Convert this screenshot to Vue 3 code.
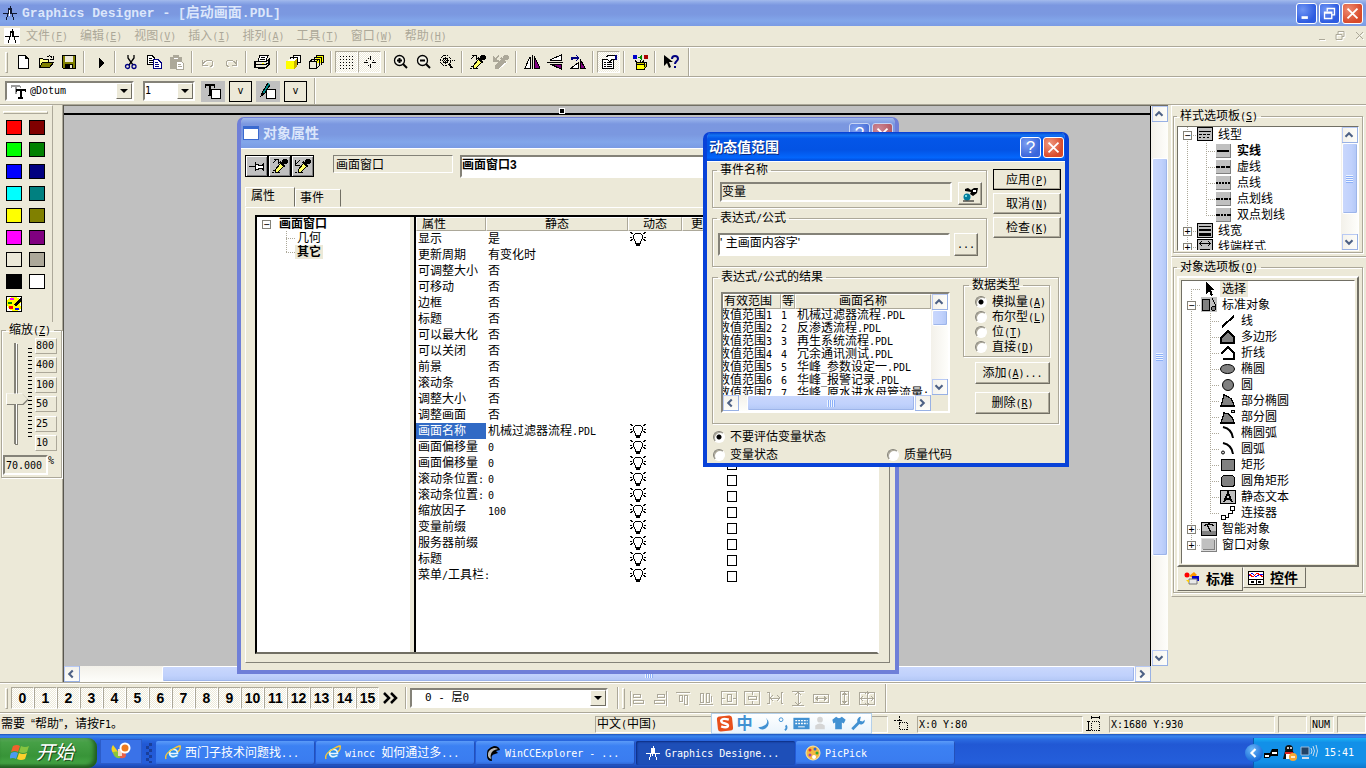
<script setup>
import { h, ref } from 'vue'

// Text helper: half-width runs are set in a 6px-pitch mono face; "&X" underlines X.
const T = (props) => {
  const out = []
  for (const run of String(props.s).match(/[ -~]+|[^ -~]+/g) || []) {
    if (/^[ -~]/.test(run)) {
      const kids = run.split(/(&\w)/).filter(Boolean).map((p) => (/^&\w$/.test(p) ? h('u', p[1]) : p))
      out.push(h('span', { class: 'lat' }, kids))
    } else out.push(run)
  }
  return h('span', { class: 'txt' }, out)
}
T.props = ['s']

const art = {
  compass: '<path d="M8 1v3M7 6L4 15M9 6l3 9M1 8h14" fill="none" stroke="currentColor"/><path d="M6 3h4v5H6z" fill="currentColor"/><path d="M7 5h1v6H7z" fill="#fff"/>',
  new: '<path d="M3 1.5h7l3 3v10H3z" fill="#fff" stroke="#000"/><path d="M10 1.5v3h3" fill="none" stroke="#000"/>',
  open: '<path d="M1.500 13.500v-9h3l1 1h5v3" fill="#ff8" stroke="#000"/><path d="M1.500 13.500l3-5h11l-4 5z" fill="#808000" stroke="#000"/><path d="M9 3c2-2 4-1 5 1M15 2v3h-3" fill="none" stroke="#000"/>',
  save: '<path d="M1.500 1.500h13v13h-12l-1-1z" fill="#808000" stroke="#000"/><path d="M4 2h8v6H4z" fill="#ece9d8"/><path d="M4 10h8v4H4z" fill="#000"/><path d="M9 11h2v3H9z" fill="#ece9d8"/>',
  play: '<path d="M7 4l5 5-5 5z" fill="#000"/>',
  cut: '<path d="M5 1v3l5 7M11 1v3l-5 7" fill="none" stroke="#000" stroke-width="1.300"/><circle cx="4.500" cy="12.500" r="2" fill="none" stroke="#000080" stroke-width="1.300"/><circle cx="11" cy="12.500" r="2" fill="none" stroke="#000080" stroke-width="1.300"/>',
  copy: '<path d="M1 1.500h5l2 2v7H1z" fill="#fff" stroke="#000"/><path d="M2.500 4h3M2.500 6h4M2.500 8h4" stroke="#000"/><path d="M7 5.500h5l3 3v6H7z" fill="#fff" stroke="#000080"/><path d="M9 8.500h3M9 10.500h4M9 12.500h4" stroke="#000080"/>',
  paste: '<path d="M1 3h12v12H1z" fill="#aca899"/><path d="M4 1h6v3H4z" fill="#aca899"/><path d="M5 4h4v1H5z" fill="#fff"/><path d="M7.500 7.500h5l2 2v6h-7z" fill="#fff" stroke="#aca899"/><path d="M9 10.500h3M9 12.500h4" stroke="#aca899"/>',
  undo: '<path d="M2.500 6v5h5M3 10c3-5 10-5 10-1 0 2-1 3-3 4" fill="none" stroke="#fff" transform="translate(1 1)"/><path d="M2.500 6v5h5M3 10c3-5 10-5 10-1 0 2-1 3-3 4" fill="none" stroke="#aca899"/>',
  redo: '<path d="M13.500 6v5h-5M13 10c-3-5-10-5-10-1 0 2 1 3 3 4" fill="none" stroke="#fff" transform="translate(1 1)"/><path d="M13.500 6v5h-5M13 10c-3-5-10-5-10-1 0 2 1 3 3 4" fill="none" stroke="#aca899"/>',
  print: '<path d="M4 7l2-5.500h8L12 7" fill="#fff" stroke="#000"/><path d="M7 3.500h4M6 5.500h5" stroke="#000"/><path d="M1 7.500h11l3-2v5l-3 3H1z" fill="#ece9d8" stroke="#000" stroke-width="1.400"/><path d="M1 10.500h11l3-2M4 14.500h7" stroke="#000" fill="none" stroke-width="1.400"/><path d="M8 9h2v1H8z" fill="#ff0"/>',
  front: '<path d="M8.500 6V1.500h7v7H13M5.500 5V3.500h7v7H10" stroke="#000" fill="#fff"/><path d="M2 7l2-2h7L9 7z" fill="#fff"/><path d="M1 7h8v8H1z" fill="#ff0"/><path d="M9 7l3-3v8l-3 3z" fill="#c8b400"/>',
  back: '<path d="M8 1h7v8H8z" fill="#ff0"/><path d="M3.500 12V5.500h8V12M6.500 8V3.500h7v7" stroke="#000" fill="none"/><path d="M8.500 3V1.500h7v7H14" stroke="#000" fill="none"/><path d="M1.500 7.500h7v7h-7z" stroke="#000" fill="#ece9d8"/><path d="M1.500 7.500l2-2M8.500 7.500l2-2M8.500 14.500l3-3" stroke="#000"/>',
  grid: '<g stroke="#000" stroke-dasharray="1 2"><path d="M1 2.500h14M1 5.500h14M1 8.500h14M1 11.500h14M1 14.500h14"/></g>',
  snap: '<path d="M8 2v4M8 10v4M2 8h4M10 8h4" stroke="#000"/><path d="M6 4.500h4M6 11.500h4M4.500 6v4M11.500 6v4" stroke="#000" stroke-dasharray="1 1"/>',
  zin: '<circle cx="6.500" cy="6.500" r="5" fill="#fff" fill-opacity=".4" stroke="#000" stroke-width="1.300"/><path d="M4 6.500h5M6.500 4v5" stroke="#000" stroke-width="2"/><path d="M10 10l4 4" stroke="#000" stroke-width="2"/>',
  zout: '<circle cx="6.500" cy="6.500" r="5" fill="#fff" fill-opacity=".4" stroke="#000" stroke-width="1.300"/><path d="M4 6.500h5" stroke="#000" stroke-width="2"/><path d="M10 10l4 4" stroke="#000" stroke-width="2"/>',
  zsel: '<circle cx="6.500" cy="6.500" r="5" fill="none" stroke="#000" stroke-dasharray="2 1"/><circle cx="6.500" cy="6.500" r="2.500" fill="none" stroke="#000"/><path d="M6.500 3v7M3 6.500h13" stroke="#000" stroke-dasharray="1 1"/><path d="M10 10l3 4" stroke="#000" stroke-width="2"/>',
  pick: '<path d="M1 5l4-4M2 1.500h4v4" fill="none" stroke="#000"/><path d="M9 5l3 3-6 6H3v-2z" fill="#ff6" stroke="#000"/><path d="M8 4l5 5" stroke="#000" stroke-width="2"/><circle cx="13" cy="3.500" r="3" fill="#000"/><path d="M0 14.500h9M1 12.500h3" stroke="#000" stroke-dasharray="2 1"/>',
  apply: '<path d="M5 2L1 6M.500 2v5h4" fill="none" stroke="#000"/><path d="M9 5l3 3-6 6H3v-2z" fill="#ff6" stroke="#000"/><path d="M8 4l5 5" stroke="#000" stroke-width="2"/><circle cx="13" cy="3.500" r="3" fill="#000"/><path d="M0 14.500h9" stroke="#000" stroke-dasharray="2 1"/>',
  applyoff: '<path d="M6 2L1 6M.500 2v5h5M9 5l3 3-6 6H3v-2z" fill="#aca899" stroke="#aca899" stroke-width="1.500"/><path d="M8 4l5 5" stroke="#aca899" stroke-width="2"/><circle cx="13" cy="3.500" r="3" fill="#aca899"/><path d="M6 15l8-7" stroke="#fff"/>',
  mirh: '<path d="M6 3v11H1z" fill="#fff" stroke="#000"/><path d="M8 1v14" stroke="#000"/><path d="M10 2v12h6z" fill="#800080" stroke="#000"/>',
  mirv: '<path d="M14 1v5H3z" fill="#fff" stroke="#000"/><path d="M0 8h16" stroke="#000"/><path d="M14 15v-5H3z" fill="#800080" stroke="#000"/>',
  rot: '<path d="M2 6V4h6M6 1l3 3-3 3" fill="none" stroke="#000080" stroke-width="1.300"/><path d="M8 9v5H1z" fill="#fff" stroke="#000"/><path d="M10 5v9h5z" fill="#800080" stroke="#000"/>',
  prop: '<path d="M1.500 5.500h11v9h-11z" fill="#fff" stroke="#000"/><path d="M3 8h2M6 8h5M3 10.500h2M6 10.500h5M3 12.500h2M6 12.500h5" stroke="#000"/><path d="M5 3l3-2h5l3 2-2 3-3-1-2 3-2-2" fill="#fff" stroke="#000"/><path d="M14 1h2v5h-2z" fill="#000080"/>',
  lib: '<circle cx="3" cy="3" r="2.500" fill="#00c"/><path d="M10 1v5L6 3.500z" fill="#080"/><path d="M12 1h4v4h-4z" fill="#a00"/><path d="M3 6l2 3M8 6v3M12 6l-2 3" stroke="#000"/><path d="M4 10h8v5H4z" fill="#ff0" stroke="#000"/><path d="M4 10l2-2h8l-2 2M14 8v5l-2 2" stroke="#000" fill="#cc0"/>',
  help: '<path d="M1 1v11l3-3 2 5 2-1-2-5h4z" fill="#000"/><path d="M9 5c0-4 6-4 6 0 0 2-3 2-3 5M12 12v2" fill="none" stroke="#000080" stroke-width="2"/>',
  tt: '<path d="M1 3h9M5.500 3v8" stroke="#999" stroke-width="2"/><path d="M1 3v2M10 3v2" stroke="#999"/><path d="M6 7h9M10.500 7v8M8 14.500h5" stroke="#000" stroke-width="2"/><path d="M6 6v3M15 6v3" stroke="#000"/>',
  fontbox: '<path d="M0 2h10M5 2v10" stroke="#000" stroke-width="2"/><path d="M.500 1v4M9.500 1v4M3 12h4" stroke="#000"/><path d="M6.500 6.500h9v9h-9z" fill="#fff" stroke="#000"/>',
  penbox: '<path d="M8 0L3 8l-2 5 4-3 5-8" fill="#088" stroke="#000"/><path d="M0 14l5-4" stroke="#000"/><path d="M6.500 6.500h9v9h-9z" fill="#fff" stroke="#000"/>',
  pin: '<path d="M0 8.500h6M6.500 4v9M6 6.500h3l1 1h3l1.500-2v7l-1.500-2h-3l-1 1H6" fill="#fff" stroke="#000"/>',
  palette: '<path d="M0 0h16v16H0z" fill="#fff"/><path d="M1 6Q1 1 8 1t7 5q-2 2 0 5t-6 4Q1 15 1 6z" fill="#ff0"/><path d="M4 2h4v2H4z" fill="#f0f"/><path d="M2 6h4v2H2z" fill="#080"/><path d="M3 10h4v3H3z" fill="#f00"/><path d="M9 12h4v2H9z" fill="#00f"/><path d="M15 1L8 9l2 2 5-6z" fill="#000"/><path d="M.500.500h15v15H.500z" fill="none" stroke="#000"/>',
  bulb: '<path d="M5.500 12.500v-2l-2-3v-3l2-2h5l2 2v3l-2 3v2z" fill="#fff" stroke="#000"/><path d="M6 12h4v3H6z" fill="#000"/><path d="M0 1l3 2M0 6h2M0 10l3-2M16 1l-3 2M16 6h-2M16 10l-3-2" stroke="#000"/>',
  varpick: '<circle cx="5" cy="11" r="3.500" fill="#007c9c"/><circle cx="4" cy="10" r="1" fill="#9ff"/><path d="M3 3l3-1 3 2 3-2h4l-1 5-4 3-3-2 1-2-6-1z" fill="#000"/><path d="M11 4h3v2h-3z" fill="#fff"/><path d="M1 15h11" stroke="#000"/>',
  linetype: '<path d="M.500.500h15v13H.500z" fill="#c0c0c0" stroke="#000" stroke-width="1.300"/><path d="M2 4h12" stroke="#000"/><path d="M2 7h12" stroke="#000" stroke-dasharray="3 1"/><path d="M2 10h12" stroke="#000" stroke-dasharray="2 2"/>',
  linew: '<path d="M.500.500h15v14H.500z" fill="#c0c0c0" stroke="#000" stroke-width="1.300"/><path d="M2 3.500h12" stroke="#000"/><path d="M2 7h12" stroke="#000" stroke-width="2"/><path d="M2 11.500h12" stroke="#000" stroke-width="3"/>',
  lineend: '<path d="M.500.500h15v15H.500z" fill="#c0c0c0" stroke="#000" stroke-width="1.300"/><path d="M3 4.500h10M5 2L2.500 4.500 5 7M11 2l2.500 2.500L11 7M3 10.500h10" stroke="#000" fill="none"/>',
  l1: '<path d="M0 1h15v14H0z" fill="#c0c0c0"/><path d="M0 14.500h15M14.500 1v14" stroke="#808080"/><path d="M1 8h12" stroke="#000" stroke-width="2"/>',
  l2: '<path d="M0 1h15v14H0z" fill="#c0c0c0"/><path d="M0 14.500h15M14.500 1v14" stroke="#808080"/><path d="M0 8h15" stroke="#000" stroke-width="2" stroke-dasharray="4 1"/>',
  l3: '<path d="M0 1h15v14H0z" fill="#c0c0c0"/><path d="M0 14.500h15M14.500 1v14" stroke="#808080"/><path d="M0 8h15" stroke="#000" stroke-width="2" stroke-dasharray="2 1"/>',
  l4: '<path d="M0 1h15v14H0z" fill="#c0c0c0"/><path d="M0 14.500h15M14.500 1v14" stroke="#808080"/><path d="M0 8h15" stroke="#000" stroke-width="2" stroke-dasharray="4 1 2 1"/>',
  l5: '<path d="M0 1h15v14H0z" fill="#c0c0c0"/><path d="M0 14.500h15M14.500 1v14" stroke="#808080"/><path d="M0 8h15" stroke="#000" stroke-width="2" stroke-dasharray="4 1 2 1 2 1"/>',
  arrow: '<path d="M5 1v12l3-3 2 5 2-1-2-5h4z" fill="#000"/>',
  std: '<path d="M0 0h16v15H0z" fill="#c0c0c0"/><path d="M1.500 2.500h7v11h-7z" fill="#808080" stroke="#000" stroke-width="1.300"/><path d="M11 1l3 6v4" stroke="#000" fill="none"/><circle cx="12.500" cy="11.500" r="2" fill="#808080" stroke="#000"/>',
  line: '<path d="M2 14L14 3" stroke="#000" stroke-width="2"/>',
  poly: '<path d="M1 14V9l7-7 6 6v6z" fill="#808080" stroke="#000" stroke-width="1.500"/>',
  polyline: '<path d="M1 9l7-7 6 6v6H3" fill="none" stroke="#000" stroke-width="1.700"/>',
  ellipse: '<ellipse cx="7.500" cy="8" rx="7" ry="4.500" fill="#808080" stroke="#000"/>',
  circle: '<circle cx="8" cy="8" r="5.500" fill="#808080" stroke="#000"/>',
  pie: '<path d="M1 13L4 2q9 2 10 11z" fill="#808080" stroke="#000" stroke-width="1.300"/>',
  pie2: '<path d="M1 14L4 4q8 0 10 10z" fill="#808080" stroke="#000" stroke-width="1.300"/><circle cx="13" cy="2.500" r="1.500" fill="#ccc" stroke="#000"/>',
  arc: '<path d="M3 2q9 2 10 11" fill="none" stroke="#000" stroke-width="2"/>',
  arc2: '<path d="M3 2q9 2 10 11" fill="none" stroke="#000" stroke-width="2"/><circle cx="3" cy="11.500" r="1.500" fill="#ccc" stroke="#000"/>',
  rect: '<path d="M1.500 2.500h13v11h-13z" fill="#808080" stroke="#000"/>',
  rrect: '<rect x="1.500" y="2.500" width="13" height="11" rx="3" fill="#808080" stroke="#000"/>',
  stext: '<path d="M.500 1.500h15v13H.500z" fill="#c0c0c0" stroke="#000"/><path d="M4 13L8 3.500l4 9.500M5.500 10h5" fill="none" stroke="#000" stroke-width="1.800"/>',
  conn: '<path d="M5 12.500h3v-4h4V6" fill="none" stroke="#000"/><path d="M1.500 10.500h4v4h-4zM10.500 1.500h4v4h-4z" fill="#fff" stroke="#000"/>',
  smart: '<path d="M.500 1.500h15v13H.500z" fill="#c0c0c0" stroke="#000"/><path d="M1 10h14v4H1z" fill="#808080"/><path d="M3 5q5-4 10 0M6 4l4 7" stroke="#000" fill="none" stroke-width="1.300"/>',
  winobj: '<path d="M0 1h16v14H0z" fill="#808080"/><path d="M0 1h15v13H0z" fill="#dcdcdc"/><path d="M2 3h12v10H2z" fill="#808080"/><path d="M1 2h12v10H1z" fill="#c0c0c0"/>',
  tabstd: '<circle cx="3" cy="4" r="2.500" fill="#f00"/><path d="M5 5l5-4 3 3-4 3z" fill="#f90"/><path d="M8 5h7v5H8z" fill="#00c"/><path d="M5 8h8v5H5z" fill="#e8e8e8" stroke="#777"/><path d="M2 9h3v3z" fill="#fc0"/>',
  tabctl: '<path d="M.500 1.500h15v13H.500z" fill="#fff" stroke="#000"/><path d="M1 6l3-3 4 4 4-3 3 1" stroke="#00f" fill="none"/><path d="M1 4l4 3 4-4 6 4" stroke="#f00" fill="none"/><path d="M0 9h16M8 9v6" stroke="#000"/><path d="M3 12h3M10 12h3" stroke="#000" stroke-width="2"/>',
  a0: '<path d="M1.500 1v15M4 4.500h7v3H4zM4 10.500h10v3H4z"/>',
  a1: '<path d="M14.500 1v15M5 4.500h7v3H5zM2 10.500h10v3H2z"/>',
  a2: '<path d="M1 2.500h14M4.500 5v6h3V5zM9.500 5v9h3V5z"/>',
  a3: '<path d="M1 14.500h14M2.500 12V3h3v9zM8.500 12V3h3v9zM13.500 6v6"/>',
  a4: '<path d="M.500 1.500h15v13H.500zM6 4.500h4v7H6zM1 8h3M12 8h3"/>',
  a5: '<path d="M.500 1.500h15v13H.500zM4 6.500h8v3H4zM8 2v3M8 11v3"/>',
  a6: '<path d="M0 2.500h2v11H0M16 2.500h-2v11h2M3 8h10M6 5L3 8l3 3M10 5l3 3-3 3"/>',
  a7: '<path d="M2 1.500h12M2 15.500h12M8 3v11M5 5l3-3 3 3M5 12l3 3 3-3"/>',
  a8: '<path d="M.500 4.500h15v8H.500zM3 8.500h10M5 6.500l-2 2 2 2M11 6.500l2 2-2 2"/>',
  a9: '<path d="M4.500 1.500h8v13h-8zM8.500 3v10M6.500 5l2-2 2 2M6.500 11l2 2 2-2"/>',
  a10: '<path d="M.500 2.500h15v12H.500zM8 1v15M1 8.500h14M6 4l2-2 2 2M6 13l2 2 2-2M4 6L1.500 8.500 4 11M12 6l2.500 2.500L12 11"/>',
  pos: '<path d="M5.500 0v9M0 4.500h9" stroke="#000" stroke-dasharray="2 1"/><path d="M5.500 6.500h8v7h-8z" fill="none" stroke="#000" stroke-dasharray="1 1"/>',
  size: '<path d="M5.500 5.500h8v9h-8z" fill="none" stroke="#000" stroke-dasharray="1 1"/><path d="M5 1.500h9M5.500 0v3M13.500 0v3M2.500 5v10M0 14.500h5M1 5.500h3" stroke="#000"/>',
  ie: '<circle cx="8" cy="8" r="6" fill="#2a8fe6"/><path d="M4.500 8.500h8q0-4-4-4t-4 4q1 4 5 3l3-1" stroke="#e8f6ff" stroke-width="1.700" fill="none"/><path d="M1 14Q-1 9 8 4t7-2q1 2-2 5" stroke="#f6c83a" fill="none" stroke-width="1.400"/>',
  wincc: '<path d="M2 11Q1 3 9 1q5 0 6 4l-4 1 2 2-3 1q-5 1-3 7-5 0-5-5z" fill="#000"/><path d="M3 11q-1-6 6-8 3 0 4 1-6 1-7 5-1 2 0 5-2 0-3-3z" fill="#b8b8b8"/>',
  pic: '<circle cx="8" cy="8" r="7" fill="#f4b942"/><circle cx="8" cy="8" r="7" fill="none" stroke="#fde6a6"/><circle cx="5" cy="5" r="1.500" fill="#d33"/><circle cx="10" cy="4" r="1.500" fill="#36c"/><circle cx="12" cy="8" r="1.500" fill="#3a3"/><circle cx="5" cy="10" r="1.500" fill="#a4a"/><circle cx="9" cy="12" r="2" fill="#fff"/>',
}
const smooth = ['ie', 'wincc', 'pic', 'ellipse', 'circle', 'zin', 'zout', 'cut', 'varpick', 'tabstd', 'arc', 'arc2', 'help']
const Ico = (props) =>
  h('svg', {
    class: 'ico',
    viewBox: '0 0 16 16',
    'aria-hidden': 'true',
    'shape-rendering': smooth.includes(props.n) ? 'auto' : 'crispEdges',
    innerHTML: art[props.n],
  })
Ico.props = ['n']

const chev = { up: 'M4 10l4-4 4 4', down: 'M4 6l4 4 4-4', left: 'M10 4L6 8l4 4', right: 'M6 4l4 4-4 4' }
const Chev = (props) =>
  h('button', { class: 'sbtn', type: 'button', 'aria-label': props.d }, [
    h('svg', { viewBox: '0 0 16 16' }, [
      h('path', { d: chev[props.d], fill: 'none', stroke: '#4d6185', 'stroke-width': 2.4 }),
    ]),
  ])
Chev.props = ['d']

const menus = ['文件(&F)', '编辑(&E)', '视图(&V)', '插入(&I)', '排列(&A)', '工具(&T)', '窗口(&W)', '帮助(&H)']
const tools = ['new', 'open', 'save', '|', 'play', '|', 'cut', 'copy', 'paste', '|', 'undo', 'redo', '|', 'print', '|', 'front', 'back', '|', 'grid', 'snap', '|', 'zin', 'zout', 'zsel', '|', 'pick', 'applyoff', '|', 'mirh', 'mirv', 'rot', '|', 'prop', '|', 'lib', '|', 'help']
const pressed = ['grid', 'snap', 'prop']
const swatches = ['red', 'maroon', 'lime', 'green', 'blue', 'navy', 'cyan', 'teal', 'yellow', 'olive', 'magenta', 'purple', 'face', 'gray', 'black', 'white']
const zooms = [800, 400, 100, 50, 25, 10]

const props1 = [
  ['显示', '是', 1], ['更新周期', '有变化时'], ['可调整大小', '否'], ['可移动', '否'], ['边框', '否'],
  ['标题', '否'], ['可以最大化', '否'], ['可以关闭', '否'], ['前景', '否'], ['滚动条', '否'],
  ['调整大小', '否'], ['调整画面', '否'], ['画面名称', '机械过滤器流程.PDL', 1], ['画面偏移量', '0', 1],
  ['画面偏移量', '0', 1], ['滚动条位置:', '0', 1], ['滚动条位置:', '0', 1], ['缩放因子', '100', 1],
  ['变量前缀', '', 1], ['服务器前缀', '', 1], ['标题', '', 1], ['菜单/工具栏:', '', 1],
]
const results = ['机械过滤器流程.PDL', '反渗透流程.PDL', '再生系统流程.PDL', '冗余通讯测试.PDL', '华峰_参数设定一.PDL', '华峰_报警记录.PDL', '华峰_原水进水母管流量:']
const types = ['模拟量(&A)', '布尔型(&L)', '位(&T)', '直接(&D)']

const styleTree = [
  ['-', 'linetype', '线型'],
  ['c', 'l1', '实线', 'bold'], ['c', 'l2', '虚线'], ['c', 'l3', '点线'], ['c', 'l4', '点划线'], ['e', 'l5', '双点划线'],
  ['+', 'linew', '线宽'], ['+', 'lineend', '线端样式'],
]
const objTree = [
  ['s', 'arrow', '选择', 'hot'], ['-', 'std', '标准对象'],
  ['c', 'line', '线'], ['c', 'poly', '多边形'], ['c', 'polyline', '折线'], ['c', 'ellipse', '椭圆'],
  ['c', 'circle', '圆'], ['c', 'pie', '部分椭圆'], ['c', 'pie2', '部分圆'], ['c', 'arc', '椭圆弧'],
  ['c', 'arc2', '圆弧'], ['c', 'rect', '矩形'], ['c', 'rrect', '圆角矩形'], ['c', 'stext', '静态文本'],
  ['e', 'conn', '连接器'], ['+', 'smart', '智能对象'], ['+', 'winobj', '窗口对象'],
]
const tasks = [['ie', '西门子技术问题找...'], ['ie', 'wincc 如何通过多...'], ['wincc', 'WinCCExplorer - ...'], ['compass', 'Graphics Designe...'], ['pic', 'PicPick']]
const dtype = ref(0)
const quality = ref(0)
const zoom = ref(44)
</script>

<template>
  <div class="screen">
    <header class="caption idle main-cap">
      <Ico n="compass" />
      <h1><span class="wide">Graphics Designer - [</span>启动画面<span class="wide">.PDL]</span></h1>
      <button class="cap" aria-label="最小化"><svg viewBox="0 0 21 21"><path d="M5 15h7" stroke="#fff" stroke-width="3" /></svg></button>
      <button class="cap" aria-label="还原"><svg viewBox="0 0 21 21"><path d="M8 8V5h8v7h-3M5 9h8v7H5zM5 10h8" stroke="#fff" stroke-width="1.500" fill="none" /></svg></button>
      <button class="cap close" aria-label="关闭"><svg viewBox="0 0 21 21"><path d="M5 5l11 11M16 5L5 16" stroke="#fff" stroke-width="2" /></svg></button>
    </header>

    <nav class="menubar">
      <span class="mdi"><Ico n="compass" /></span>
      <button v-for="m in menus" :key="m"><T :s="m" /></button>
      <svg class="mdibtns" viewBox="0 0 50 12"><g fill="none" stroke="#fff" transform="translate(1 1)"><path d="M3 9.500h6M22 4V1.500h6v5h-2M20 4.500h6v5h-6zM40 2l7 7M47 2l-7 7" /></g><g fill="none" stroke="#aca899"><path d="M3 9.500h6M22 4V1.500h6v5h-2M20 4.500h6v5h-6zM40 2l7 7M47 2l-7 7" /></g></svg>
    </nav>

    <div class="bar tools">
      <i class="grip"></i>
      <template v-for="(t, i) in tools" :key="i">
        <i v-if="t === '|'" class="sep"></i>
        <button v-else class="tool" :class="{ down: pressed.includes(t) }" :aria-label="t"><Ico :n="t" /></button>
      </template>
      <i class="sep last"></i>
    </div>

    <div class="bar fonts">
      <div class="combo font"><Ico n="tt" /><select aria-label="字体"><option>@Dotum</option></select><i class="drop"></i></div>
      <div class="combo size"><select aria-label="字号"><option>1</option></select><i class="drop"></i></div>
      <button class="gray" aria-label="字体颜色"><Ico n="fontbox" /></button>
      <button class="vee">v</button>
      <button class="gray" aria-label="线条颜色"><Ico n="penbox" /></button>
      <button class="vee">v</button>
      <i class="sep"></i>
    </div>

    <main>
      <aside class="left">
        <section class="palette">
          <i class="hgrip"></i>
          <div class="swatches">
            <button v-for="c in swatches" :key="c" class="sw" :class="c" :aria-label="c"></button>
            <button class="more" aria-label="调色板"><Ico n="palette" /></button>
          </div>
        </section>
        <fieldset class="zoom">
          <legend><T s="缩放(&Z)" /></legend>
          <div class="zrow">
            <input v-model="zoom" class="slider" type="range" min="0" max="100" aria-label="缩放" />
            <i class="ticks"></i>
            <div class="zbtns"><button v-for="z in zooms" :key="z">{{ z }}</button></div>
          </div>
          <label class="pct"><input value="70.000" aria-label="缩放百分比" />%</label>
        </fieldset>
      </aside>

      <div class="work">
        <div class="canvas">
          <div class="sheet"></div>
          <i class="handle"></i>

          <section class="window props">
            <header class="caption idle">
              <i class="winicon"></i>
              <h2>对象属性</h2>
              <button class="cap" aria-label="帮助">?</button>
              <button class="cap close" aria-label="关闭"><svg viewBox="0 0 21 21"><path d="M5 5l11 11M16 5L5 16" stroke="#fff" stroke-width="2" /></svg></button>
            </header>
            <div class="body">
              <div class="ptools">
                <button aria-label="固定"><Ico n="pin" /></button>
                <button aria-label="拾取"><Ico n="pick" /></button>
                <button aria-label="应用"><Ico n="apply" /></button>
                <input class="otype" value="画面窗口" readonly aria-label="对象类型" />
                <input class="oname" value="画面窗口3" aria-label="对象名称" />
              </div>
              <div class="tabs"><button class="on">属性</button><button>事件</button></div>
              <div class="page">
                <div class="split">
                  <ul class="ptree">
                    <li><i class="g tg"><b class="box">−</b></i><strong>画面窗口</strong></li>
                    <li><i class="g"></i><i class="g v h"></i><span>几何</span></li>
                    <li><i class="g"></i><i class="g v end h"></i><strong class="hot">其它</strong></li>
                  </ul>
                  <div class="plist">
                    <table>
                      <colgroup><col class="p1" /><col class="p2" /><col class="p3" /><col class="p4" /><col /></colgroup>
                      <thead><tr><th class="first">属性</th><th>静态</th><th>动态</th><th>更…</th><th>间接</th></tr></thead>
                      <tbody>
                        <tr v-for="(p, i) in props1" :key="i">
                          <td :class="{ sel: i === 12 }"><T :s="p[0]" /></td>
                          <td><T :s="p[1]" /></td>
                          <td class="dyn"><Ico v-if="p[2]" n="bulb" /></td>
                          <td></td>
                          <td class="ind"><input v-if="p[2]" type="checkbox" aria-label="间接" /></td>
                        </tr>
                      </tbody>
                    </table>
                  </div>
                </div>
              </div>
            </div>
          </section>

          <section class="window range">
            <header class="caption live">
              <h2>动态值范围</h2>
              <button class="cap" aria-label="帮助">?</button>
              <button class="cap close" aria-label="关闭"><svg viewBox="0 0 21 21"><path d="M5 5l11 11M16 5L5 16" stroke="#fff" stroke-width="2" /></svg></button>
            </header>
            <div class="body">
              <div class="top">
                <div class="fields">
                  <fieldset class="ev">
                    <legend>事件名称</legend>
                    <input value="变量" readonly aria-label="事件名称" />
                    <button class="btn sq" aria-label="选择变量"><Ico n="varpick" /></button>
                  </fieldset>
                  <fieldset class="ex">
                    <legend><T s="表达式/公式" /></legend>
                    <input value="' 主画面内容字'" aria-label="表达式" />
                    <button class="btn sq">...</button>
                  </fieldset>
                </div>
                <div class="acts">
                  <button class="btn def"><T s="应用(&P)" /></button>
                  <button class="btn"><T s="取消(&N)" /></button>
                  <button class="btn"><T s="检查(&K)" /></button>
                </div>
              </div>
              <fieldset class="res">
                <legend><T s="表达式/公式的结果" /></legend>
                <div class="rlist">
                  <div class="rmain">
                    <table>
                      <colgroup><col class="r1" /><col class="r2" /><col /></colgroup>
                      <thead><tr><th class="lead">有效范围</th><th>等</th><th>画面名称</th></tr></thead>
                      <tbody>
                        <tr v-for="(r, i) in results" :key="r">
                          <td class="cut"><T :s="'数值范围' + (i + 1)" /></td><td><T :s="i + 1" /></td><td><T :s="r" /></td>
                        </tr>
                      </tbody>
                    </table>
                  </div>
                  <div class="vs"><Chev d="up" /><i class="thumb small"></i><i class="fill"></i><Chev d="down" /></div>
                  <div class="hs"><Chev d="left" /><i class="thumb"><i class="ridges"></i></i><Chev d="right" /></div>
                </div>
                <div class="rside">
                  <fieldset class="dt">
                    <legend>数据类型</legend>
                    <label v-for="(t, i) in types" :key="t"><input v-model="dtype" type="radio" name="dt" :value="i" /><T :s="t" /></label>
                  </fieldset>
                  <button class="btn"><T s="添加(&A)..." /></button>
                  <button class="btn"><T s="删除(&R)" /></button>
                </div>
              </fieldset>
              <div class="qual">
                <label><input v-model="quality" type="radio" name="q" :value="0" />不要评估变量状态</label>
                <label><input v-model="quality" type="radio" name="q" :value="1" />变量状态</label>
                <label><input v-model="quality" type="radio" name="q" :value="2" />质量代码</label>
              </div>
            </div>
          </section>
        </div>
        <div class="vs"><Chev d="up" /><i class="pre"></i><i class="thumb"><i class="ridges"></i></i><i class="post"></i><Chev d="down" /></div>
        <div class="hs"><Chev d="left" /><i class="pre"></i><i class="thumb"><i class="ridges"></i></i><Chev d="right" /></div>
      </div>

      <aside class="right">
        <section class="panel">
          <fieldset class="sty">
            <legend><T s="样式选项板(&S)" /></legend>
            <div class="stylist">
              <ul class="tree">
                <li v-for="r in styleTree" :key="r[2]">
                  <i class="g v" :class="{ h: r[0] === '-' || r[0] === '+' }"><b v-if="r[0] === '-' || r[0] === '+'" class="box">{{ r[0] === '-' ? '−' : '+' }}</b></i>
                  <i v-if="r[0] === 'c' || r[0] === 'e'" class="g v h" :class="{ end: r[0] === 'e' }"></i>
                  <Ico :n="r[1]" /><span :class="r[3]">{{ r[2] }}</span>
                </li>
              </ul>
              <div class="vs"><Chev d="up" /><i class="thumb"><i class="ridges"></i></i><i class="post"></i><Chev d="down" /></div>
            </div>
          </fieldset>
        </section>
        <section class="panel">
          <fieldset class="obj">
            <legend><T s="对象选项板(&O)" /></legend>
            <div class="objbox">
              <ul class="tree">
                <li v-for="(r, i) in objTree" :key="r[2]">
                  <i class="g v" :class="{ h: '-+s'.includes(r[0]), head: i === 0, end: i === 16 }"><b v-if="'-+'.includes(r[0])" class="box">{{ r[0] === '-' ? '−' : '+' }}</b></i>
                  <i v-if="r[0] === 'c' || r[0] === 'e'" class="g v h" :class="{ end: r[0] === 'e' }"></i>
                  <Ico :n="r[1]" /><span :class="r[3]">{{ r[2] }}</span>
                </li>
              </ul>
            </div>
            <div class="otabs"><button class="on"><Ico n="tabstd" />标准</button><button><Ico n="tabctl" />控件</button></div>
          </fieldset>
        </section>
      </aside>
    </main>

    <div class="bar layers">
      <i class="grip"></i>
      <button v-for="n in 16" :key="n" class="num">{{ n - 1 }}</button>
      <button class="chevs" aria-label="更多"><svg viewBox="0 0 16 12"><path d="M1 1l5 5-5 5M8 1l5 5-5 5" fill="none" stroke="#000" stroke-width="2.500" /></svg></button>
      <i class="sep"></i>
      <div class="combo layer"><select aria-label="图层"><option>0 - 层0</option></select><i class="drop"></i></div>
      <i class="sep"></i>
      <i class="grip two"></i>
      <button v-for="n in 11" :key="n" class="tool align" :aria-label="'对齐' + n"><Ico :n="'a' + (n - 1)" /></button>
      <i class="sep last"></i>
    </div>

    <footer class="status">
      <span class="msg">需要<T s=" “帮助”" />，请按<T s="F1" />。</span>
      <span class="pane lang"><T s="中文(中国)" /></span>
      <Ico n="pos" />
      <span class="pane xy"><T s="X:0 Y:80" /></span>
      <Ico n="size" />
      <span class="pane xy"><T s="X:1680 Y:930" /></span>
      <span class="pane s1"></span>
      <span class="pane s2"><T s="NUM" /></span>
      <span class="pane s1"></span>
      <div class="ime">
        <svg viewBox="0 0 160 20" aria-hidden="true">
          <rect x="2" y="2" width="16" height="16" rx="3" fill="#e8501c" transform="rotate(-6 10 10)" />
          <path d="M14 6q-7-2-8 1 0 2 4 3t3 3q-2 2-7 0" fill="none" stroke="#fff" stroke-width="2.500" />
          <text class="zh" x="22" y="16">中</text>
          <path d="M53 4q5 8-8 10 3 4 8 1 6-5 0-11z" fill="#4291d2" />
          <circle cx="69" cy="6" r="2" fill="none" stroke="#4291d2" /><path d="M74 12q2 3-1 5" stroke="#4291d2" stroke-width="2" fill="none" />
          <rect x="82" y="4" width="17" height="12" fill="#4291d2" /><path d="M84 7h13M84 10h13" stroke="#fff" stroke-width="1.500" stroke-dasharray="2 1" /><path d="M87 13.500h7" stroke="#fff" />
          <circle cx="110" cy="6" r="3" fill="#d5d5d5" /><path d="M105 16v-4q5-4 10 0v4z" fill="#d5d5d5" />
          <path d="M123 6l4-3q3 3 6 0l4 3-2 4-2-1v7h-7V9l-2 1z" fill="#4291d2" />
          <path d="M144 16l8-8" stroke="#4291d2" stroke-width="3" /><path d="M157 6a4 4 0 1 1-4-3l-1 4 3 1z" fill="#4291d2" />
        </svg>
      </div>
    </footer>

    <div class="taskbar">
      <button class="start">
        <svg viewBox="0 0 20 20"><path d="M3 3q4-2 7 0L8 9Q5 7 1 9z" fill="#f0622c" /><path d="M11 3q4 2 8 0l-2 6q-4 2-8 0z" fill="#86c440" /><path d="M1 10q4-2 7 0l-2 6q-3-2-7 0z" fill="#4a9af0" /><path d="M9 10q4 2 8 0l-2 6q-4 2-8 0z" fill="#fcd02c" /></svg>
        开始
      </button>
      <button class="quick" aria-label="快速启动">
        <svg viewBox="0 0 24 20"><path d="M4 3q-3 4 0 8t6 0l-3-4z" fill="#f2d421" /><path d="M4 10q1 7 7 6V9z" fill="#8ac53a" /><path d="M11 9q6-1 6 5-1 3-6 2z" fill="#e8604a" /><path d="M9 7h4v7H9z" fill="#f5d9c0" /><circle cx="16" cy="6" r="5.500" fill="#fff" /><circle cx="16" cy="6" r="3.500" fill="#ee7a1e" /></svg>
      </button>
      <i class="dots"></i>
      <button v-for="(t, i) in tasks" :key="i" class="task" :class="{ on: i === 3 }"><Ico :n="t[0]" /><T :s="t[1]" /></button>
      <div class="tray">
        <button class="less" aria-label="显示图标"><svg viewBox="0 0 16 16"><path d="M9.500 4l-4 4 4 4" fill="none" stroke="#fff" stroke-width="2.200" /></svg></button>
        <svg class="ti" viewBox="0 0 58 18" aria-hidden="true">
          <path d="M1 9h6l2-4h6v7H8l-2 2H1z" fill="#000" /><path d="M2 11h4v2H2zM9 8h5v2H9z" fill="#fff" />
          <circle cx="26" cy="5" r="4" fill="#111" /><path d="M22 7h8l2 8H20z" fill="#111" /><path d="M23 9h6v6h-6z" fill="#fff" /><path d="M22 8h8v2h-8z" fill="#d22" /><circle cx="25" cy="4" r="1" fill="#fff" /><circle cx="28" cy="4" r="1" fill="#fff" /><circle cx="30" cy="13" r="4" fill="#f6a832" /><path d="M28 13h4" stroke="#fff" stroke-width="1.500" />
          <path d="M38 3h8v8h-8z" fill="#246" stroke="#9bd" /><path d="M39 13h7v2h-7z" fill="#cde" /><path d="M48 4q2 3 0 6M50 2q3 5 0 10M53 1q3 6 0 12" stroke="#cde" fill="none" />
        </svg>
        <time>15:41</time>
      </div>
    </div>
  </div>
</template>

<style>
html, body { margin: 0; background: #ece9d8; overflow: hidden; }
.txt { white-space: pre; }
.lat { font-family: "DejaVu Sans Mono", "Liberation Mono", monospace; font-size: 10px; line-height: 0; }
.ico { width: 16px; height: 16px; flex: none; display: block; }
.sbtn { width: 16px; height: 16px; flex: none; box-sizing: border-box; padding: 0; border: 1px solid #fff; border-radius: 3px; background: linear-gradient(135deg, #d6e2fe, #c0d1fd 50%, #acc3f8); box-shadow: inset -1px -1px #98b1e4, inset 1px 1px #b8c9f4; display: block; }
.sbtn svg { display: block; width: 14px; height: 14px; }
</style>

<style scoped>
* { box-sizing: border-box; }
.screen { height: 100vh; min-height: 768px; display: flex; flex-direction: column; background: #ece9d8; color: #000; font: 12px/14px "Liberation Sans", "Noto Sans CJK SC", sans-serif; position: relative; }
button, input, select { font: inherit; color: inherit; margin: 0; padding: 0; border: 0; background: none; border-radius: 0; outline: 0; }
i, b { display: block; font-style: normal; flex: none; }
ul { list-style: none; margin: 0; padding: 0; }
fieldset { margin: 0; padding: 0; min-width: 0; border: 1px solid #aca899; box-shadow: 1px 1px #fff, inset 1px 1px #fff; }
legend { margin-left: -2px; padding: 0 3px; line-height: 12px; height: 12px; }
h1, h2 { margin: 0; flex: 1; font-size: 14px; line-height: 18px; font-weight: bold; white-space: pre; }
.wide { font-family: "Liberation Mono", monospace; font-size: 13px; }

.caption { display: flex; align-items: center; gap: 2px; color: #dbe6fb; }
.idle { background: linear-gradient(#a3baec 0, #90abe8 8%, #7b97e0 20%, #7b98e0 55%, #82a6ea 80%, #7a9be4 100%); }
.live { background: linear-gradient(#0a4fd0 0, #1272f4 8%, #0456e8 20%, #0353e4 60%, #0366fc 88%, #024ad8 100%); color: #fff; text-shadow: 1px 1px #0a2a80; }
.cap { width: 21px; height: 21px; flex: none; border: 1px solid #fff; border-radius: 3px; background: radial-gradient(circle at 30% 30%, #7c9ef0, #3a66dc 70%); color: #fff; font-size: 17px; line-height: 19px; text-align: center; text-shadow: none; }
.cap svg { display: block; width: 19px; height: 19px; }
.cap.close { background: radial-gradient(circle at 30% 30%, #f09a80, #d84a2a 70%); }
.idle .cap { background: radial-gradient(circle at 30% 30%, #7f9ff0, #4a70d8 70%); border-color: #c8d6f6; }
.idle .cap.close { background: radial-gradient(circle at 30% 30%, #cf8a98, #b55a64 70%); }
.main-cap .cap { background: radial-gradient(circle at 30% 30%, #6f95f4, #2d5be0 70%); border-color: #fff; }
.main-cap .cap.close { background: radial-gradient(circle at 30% 30%, #ee8a70, #d84a2a 70%); }
.main-cap { height: 26px; flex: none; padding: 0 3px 0 2px; }
.main-cap > .ico { color: #101830; margin-right: 2px; }

.menubar { height: 21px; flex: none; display: flex; align-items: center; gap: 12px; padding-left: 4px; border-bottom: 1px solid #aca899; color: #aca899; }
.mdi { background: #fff; color: #000; margin-right: -6px; }
.mdibtns { width: 50px; height: 12px; margin-left: auto; }

.bar { display: flex; flex: none; align-items: center; border-top: 1px solid #fff; border-bottom: 1px solid #aca899; }
.grip { width: 3px; height: 21px; border: 1px solid; border-color: #fff #aca899 #aca899 #fff; margin: 0 3px 0 5px; }
.sep { width: 8px; height: 22px; background: linear-gradient(90deg, #aca899 50%, #fff 50%) 3px 0 / 2px 100% no-repeat; }
.sep.last { height: 100%; }
.tools { height: 30px; }
.tools .last { margin-left: 3px; }
.tool { width: 23px; height: 22px; display: flex; align-items: center; justify-content: center; }
.tool.down { border: 1px solid; border-color: #aca899 #fff #fff #aca899; background: repeating-conic-gradient(#fff 0 25%, #ece9d8 0 50%) 0 0 / 2px 2px; }
.fonts { height: 28px; padding-left: 5px; gap: 4px; }
.fonts .sep { height: 100%; }
.combo { display: flex; background: #fff; height: 20px; border: 2px solid; border-color: #848278 #fff #fff #848278; align-items: center; }
.combo select { appearance: none; flex: 1; min-width: 0; font: 10px/14px "DejaVu Sans Mono", "Noto Sans CJK SC", monospace; }
.combo .ico { margin: 0 4px 0 3px; }
.drop { width: 16px; height: 16px; background: #ece9d8; border: 1px solid; border-color: #fff #716f64 #716f64 #fff; display: flex; align-items: center; justify-content: center; }
.drop::after { content: ""; border: 4px solid transparent; border-top-color: #000; border-bottom: 0; }
.font { width: 129px; margin-right: 5px; }
.size { width: 52px; margin-right: 2px; }
.gray { width: 24px; height: 21px; background: #c0c0c0; display: flex; align-items: center; justify-content: center; }
.vee { width: 23px; height: 21px; border: 1px solid #000; font: 10px/14px "DejaVu Sans Mono", monospace; }

main { flex: 1; min-height: 0; display: flex; border-bottom: 1px solid #aca899; }
.left { width: 64px; flex: none; border-right: 2px ridge #aca899; }
.palette { height: 217px; width: 53px; border-right: 1px solid #aca899; border-top: 1px solid #fff; padding-top: 5px; }
.hgrip { height: 3px; margin: 0 4px 6px 3px; border: 1px solid; border-color: #fff #aca899 #aca899 #fff; }
.swatches { display: grid; grid-template-columns: 16px 16px; gap: 7px; padding-left: 6px; }
.sw, .more { width: 16px; height: 15px; border: 1px solid #000; }
.more { border: 0; }
.red { background: #f00; } .maroon { background: #800000; } .lime { background: #0f0; } .green { background: #008000; }
.blue { background: #00f; } .navy { background: #000080; } .cyan { background: #0ff; } .teal { background: #008080; }
.yellow { background: #ff0; } .olive { background: #808000; } .magenta { background: #f0f; } .purple { background: #800080; }
.face { background: #ece9d8; } .sw.gray { background: #aca899; } .black { background: #000; } .white { background: #fff; }
.zoom { height: 154px; margin: 2px 0 0 1px; }
.zoom legend { margin-left: 4px; }
.zrow { display: flex; height: 118px; padding-top: 2px; }
.slider { appearance: none; writing-mode: vertical-lr; direction: rtl; width: 23px; height: 101px; margin: 5px 0 0 3px; background: linear-gradient(90deg, #848278 66%, #fff 66%) 9px 0 / 3px 100% no-repeat; filter: drop-shadow(1px 1px #848278); }
.slider::-webkit-slider-thumb { appearance: none; width: 22px; height: 11px; background: linear-gradient(90deg, #fff 1px, transparent 1px), linear-gradient(#fff 1px, #ece9d8 1px); clip-path: polygon(0 0, 75% 0, 100% 50%, 75% 100%, 0 100%); }
.ticks { width: 4px; height: 90px; margin: 10px 3px 0 0; background: repeating-linear-gradient(#000 0 1px, transparent 1px 4px); }
.zbtns { display: flex; flex-direction: column; justify-content: space-between; height: 113px; }
.zbtns button { width: 22px; height: 16px; border: 1px solid; border-color: #fff #aca899 #aca899 #fff; text-align: left; font: 10px/12px "DejaVu Sans Mono", monospace; }
.pct { display: flex; font: 10px/12px "DejaVu Sans Mono", monospace; margin: 1px 0 0 1px; }
.pct input { width: 45px; height: 20px; border: 2px solid; border-color: #848278 #fff #fff #848278; padding-left: 1px; }

.work { flex: 1; min-width: 0; display: grid; grid-template: minmax(0, 1fr) 16px / minmax(0, 1fr) 17px; border-top: 1px solid #716f64; }
.canvas { position: relative; background: #c0c0c0; border-right: 1px solid #000; }
.sheet { border-bottom: 2px solid #000; height: 9px; }
.handle { position: absolute; left: 495px; top: 2px; width: 6px; height: 6px; background: #000; border: 1px solid #fff; }
.vs { display: flex; flex-direction: column; align-items: center; background: linear-gradient(90deg, #f3f1ea, #fefefb); }
.hs { display: flex; background: linear-gradient(#f3f1ea, #fefefb); }
.thumb { display: flex; align-items: center; justify-content: center; border: 1px solid #fff; border-radius: 2px; background: linear-gradient(90deg, #c9d7fc, #c0d1fc 60%, #b2c7f5); box-shadow: inset -1px -1px #9db5ea; }
.vs > .thumb { width: 16px; flex: 1; }
.hs > .thumb { height: 16px; flex: 1; background: linear-gradient(#c9d7fc, #c0d1fc 60%, #b2c7f5); }
.vs .ridges { width: 7px; height: 8px; background: repeating-linear-gradient(#eef4fe 0 1px, #8cb0f8 1px 2px); }
.hs .ridges { width: 8px; height: 7px; background: repeating-linear-gradient(90deg, #eef4fe 0 1px, #8cb0f8 1px 2px); }
.work > .vs .pre { flex: 0 1 36px; }
.work > .vs .post { flex: 0 1 94px; }
.work > .hs .pre { flex: 0 1 82px; }

.window { position: absolute; display: flex; flex-direction: column; border-radius: 7px 7px 0 0; overflow: hidden; }
.window .body { flex: 1; min-height: 0; background: #ece9d8; display: flex; flex-direction: column; }
.props { left: 173px; top: 11px; width: 662px; height: 557px; border: solid #6f7fd8; border-width: 1px 4px 4px; }
.props .caption { height: 30px; flex: none; padding: 0 2px 0 2px; }
.winicon { width: 16px; height: 14px; background: #fff; border: 1px solid #3a6ad0; border-top: 3px solid #3a6ad0; margin-right: 2px; }
.props .body { padding: 6px 5px 7px 4px; border-top: 1px solid #fff; }
.ptools { display: flex; align-items: flex-start; }
.ptools button { width: 23px; height: 22px; background: #c0c0c0; border: 1px solid #000; box-shadow: inset 1px 1px #fff, inset -1px -1px #808080; display: flex; align-items: center; justify-content: center; }
.otype { width: 120px; height: 18px; border: 1px solid; border-color: #848278 #fff #fff #848278; margin-left: 19px; padding: 0 0 2px 2px; }
.oname { flex: 1; margin: 0 4px 0 7px; height: 23px; background: #fff; border: 2px solid; border-color: #848278 #fff #fff #848278; padding: 0 0 7px; font-weight: bold; }
.tabs { display: flex; align-items: flex-end; margin-top: 9px; height: 20px; }
.tabs button { width: 46px; height: 18px; border: 1px solid; border-color: #fff #716f64 transparent #fff; text-align: left; padding-left: 4px; }
.tabs .on { width: 50px; height: 20px; padding: 0 0 3px 5px; }
.page { flex: 1; min-height: 0; border: 1px solid; border-color: #fff #848278 #848278 #fff; padding: 7px 10px 8px 9px; display: flex; }
.split { flex: 1; min-width: 0; display: flex; border: 2px solid; border-color: #000 #fff #716f64 #000; background: #fff; }
.ptree { width: 157px; flex: none; border-right: 4px solid #ece9d8; }
.ptree li, .tree li { display: flex; align-items: center; }
.ptree li { height: 14px; }
.g { width: 19px; height: 100%; display: flex; align-items: center; }
.ptree .g { width: 20px; }
.ptree .g.v { width: 18px; }
.g + span, .g + strong { padding: 0 2px; line-height: 14px; }
.g.v { background: repeating-linear-gradient(#aca899 0 1px, transparent 1px 2px) 9px 0 / 1px 100% no-repeat; }
.g.v.end { background-size: 1px 50%; }
.g.v.h { background: repeating-linear-gradient(#aca899 0 1px, transparent 1px 2px) 9px 0 / 1px 100% no-repeat, repeating-linear-gradient(90deg, #aca899 0 1px, transparent 1px 2px) 9px 50% / 10px 1px no-repeat; }
.g.v.h.end { background-size: 1px 50%, 10px 1px; }
.g.v.h.head { background-position: 9px 100%, 9px 50%; background-size: 1px 50%, 10px 1px; }
.box { width: 9px; height: 9px; margin-left: 5px; background: #fff; border: 1px solid #848278; font: 10px/7px "DejaVu Sans Mono", monospace; text-align: center; }
.hot { background: #ece9d8; }
.plist { flex: 1; min-width: 0; border-left: 2px solid #000; overflow: hidden; }
table { border-collapse: separate; border-spacing: 0; table-layout: fixed; width: 100%; }
th { font-weight: normal; padding: 0; height: 14px; line-height: 12px; background: #ece9d8; border: 1px solid; border-color: #fff #aca899 #aca899 #fff; overflow: hidden; white-space: nowrap; }
.first { text-align: left; padding-left: 5px; }
td { padding: 0 2px; height: 16px; line-height: 16px; white-space: nowrap; overflow: hidden; }
.plist td:first-child { overflow: visible; padding: 0 0 0 2px; }
.p1 { width: 70px; } .p2 { width: 142px; } .p3 { width: 54px; } .p4 { width: 42px; }
.plist td:nth-child(2) { padding-left: 2px; }
.sel { background: #316ac5; color: #fff; }
.plist td.ind { padding: 0 0 0 3px; }
.ind input { appearance: none; display: block; width: 10px; height: 11px; border: 1px solid #000; background: #fff; margin-top: 3px; }

.range { left: 639px; top: 26px; width: 366px; height: 335px; border: solid #0842d8; border-width: 1px 4px 4px; }
.range .caption { height: 28px; flex: none; padding: 0 1px 0 2px; }
.range .body { padding: 2px 5px 0; border-top: 1px solid #fff; }
.top { display: flex; gap: 6px; }
.fields { flex: 1; display: flex; flex-direction: column; gap: 4px; }
.fields fieldset { display: flex; }
.ev { height: 44px; padding: 6px 4px 0 7px; }
.ev legend, .res legend { margin-left: -3px; }
.ex { height: 55px; padding: 9px 8px 0 5px; }
.ex legend { margin-left: -1px; }
.fields input { flex: 1; min-width: 0; height: 20px; border: 2px solid; border-color: #848278 #fff #fff #848278; padding: 0 0 4px; }
.fields .ex input { height: 23px; background: #fff; padding-bottom: 6px; }
.btn { background: #ece9d8; border: 1px solid; border-color: #fff #716f64 #716f64 #fff; box-shadow: inset -1px -1px #aca899; height: 21px; display: flex; align-items: center; justify-content: center; }
.sq { width: 24px; height: 23px; margin-left: 6px; font: 10px/12px "DejaVu Sans Mono", monospace; }
.ex .sq { margin-left: 4px; align-items: flex-end; padding-bottom: 4px; }
.acts { width: 68px; margin: 5px -1px 0 0; display: flex; flex-direction: column; gap: 3px; }
.def { outline: 1px solid #000; outline-offset: -1px; }
.res { height: 153px; margin: 4px 1px 0 0; display: flex; gap: 13px; padding: 9px 8px 0 8px; }
.rlist { width: 231px; height: 121px; border: 2px solid; border-color: #848278 #fff #fff #848278; background: #ece9d8; display: grid; grid-template: minmax(0, 1fr) 16px / minmax(0, 1fr) 17px; }
.rmain { background: #fff; overflow: hidden; }
.rmain th { height: 15px; line-height: 13px; }
.rmain .lead { text-align: left; }
.rmain td { height: 13px; line-height: 13px; padding: 0; overflow: visible; }
.rmain td:last-child { padding-left: 2px; }
.rmain .cut { text-indent: -5px; }
.r1 { width: 58px; } .r2 { width: 14px; }
.rlist .small { height: 16px; flex: none; }
.rlist .fill { flex: 1; }
.rlist .hs .thumb { margin-left: 8px; }
.rside { width: 87px; margin-top: -13px; flex: none; display: flex; flex-direction: column; }
.dt { height: 78px; padding: 3px 0 0 11px; }
.dt legend { margin-left: -6px; }
.dt label { display: flex; align-items: center; gap: 5px; height: 15px; }
.rside .btn { width: 75px; margin: 5px 0 3px 12px; height: 22px; }
input[type=radio] { appearance: none; width: 12px; height: 12px; flex: none; border: 1px solid; border-color: #848278 #fff #fff #848278; border-radius: 6px; background: #fff; box-shadow: inset 1px 1px #aca899; }
input[type=radio]:checked { background: radial-gradient(circle, #000 2px, #fff 3px); }
.qual { display: grid; grid-template-columns: 174px 1fr; row-gap: 4px; margin-top: 6px; }
.qual label { display: flex; align-items: center; gap: 5px; height: 14px; padding-left: 1px; }
.qual label:first-child { grid-column: 1 / 3; }

.right { width: 198px; flex: none; padding-left: 3px; }
.panel { border-top: 1px solid #fff; border-bottom: 1px solid #aca899; border-left: 1px solid #fff; padding: 4px 3px 3px 1px; }
.panel + .panel { padding-top: 3px; }
.panel legend { margin-left: 0; }
.sty { height: 143px; padding: 4px 3px 2px; }
.stylist { height: 125px; border: 1px solid; border-color: #716f64 #fff #fff #716f64; background: #fff; display: flex; overflow: hidden; }
.tree { flex: 1; min-width: 0; }
.tree li { height: 16px; }
.tree span { padding: 0 2px; margin-left: 3px; line-height: 16px; }
.bold { font-weight: bold; }
.stylist .vs { width: 17px; }
.stylist .post { flex: 0 1 20px; }
.obj { height: 332px; padding: 3px 3px 0; }
.objbox { height: 291px; border: 2px solid; border-color: #fff #716f64 #716f64 #fff; padding: 2px 2px 1px; background: #ece9d8; display: flex; }
.objbox .tree { background: #fff; border: 1px solid; border-color: #716f64 #fff #fff #716f64; }
.otabs { display: flex; align-items: flex-start; font-size: 14px; font-weight: bold; }
.otabs button { display: flex; align-items: center; gap: 6px; height: 21px; width: 63px; padding-left: 4px; border: 1px solid; border-color: #ece9d8 #716f64 #716f64 #fff; white-space: nowrap; }
.otabs .on { width: 66px; height: 24px; padding-left: 6px; }

.layers { height: 30px; }
.num { width: 23px; height: 22px; border: 1px solid; border-color: #aca899 #fff #fff #aca899; background: repeating-conic-gradient(#fff 0 25%, #ece9d8 0 50%) 0 0 / 2px 2px; font: bold 14px/18px "Liberation Sans", sans-serif; text-align: center; }
.chevs { width: 23px; display: flex; justify-content: center; }
.chevs svg { width: 16px; height: 12px; }
.layer { width: 198px; margin-right: 6px; }
.combo.layer select { padding-left: 13px; font-size: 11px; }
.grip.two { margin: 0; }
.align .ico { fill: none; stroke: #aca899; filter: drop-shadow(1px 1px #fff); }
.layers .last { margin-left: 4px; }

.status { height: 21px; flex: none; display: flex; align-items: center; border-top: 1px solid #fff; position: relative; gap: 3px; }
.msg { flex: 1; padding-left: 1px; white-space: pre; }
.pane { height: 17px; border: 1px solid; border-color: #aca899 #fff #fff #aca899; padding-left: 1px; line-height: 15px; }
.lang { width: 293px; margin-right: 3px; }
.status .ico { margin-right: 4px; }
.xy { width: 166px; }
.s1 { width: 29px; } .s2 { width: 24px; }
.ime { position: absolute; right: 494px; top: -1px; width: 161px; height: 21px; background: linear-gradient(#fff, #eaf4fc); border: 1px solid #b4d0ea; }
.ime svg { display: block; width: 159px; height: 19px; }
.zh { font-size: 17px; font-weight: bold; fill: #4291d2; }

.taskbar { height: 34px; flex: none; display: flex; align-items: stretch; background: linear-gradient(#1c50b8 0, #3a86ee 6%, #2a6ae0 16%, #2158d4 30%, #245edb 85%, #1c44a8 100%); color: #fff; }
.start { width: 97px; margin-top: 4px; border-radius: 0 9px 9px 0; background: linear-gradient(#5aa65a 0, #46a046 15%, #389438 60%, #44a444 85%, #2c742c 100%); box-shadow: inset -3px -2px 4px #1f5a1f; display: flex; align-items: center; gap: 6px; padding-left: 10px; font-size: 19px; font-style: italic; text-shadow: 1px 1px #1c4a1c; }
.start svg { width: 20px; height: 20px; }
.quick { width: 42px; margin: 5px 4px 4px 3px; background: #3a72e8; border: 1px solid #2c5cc8; display: flex; align-items: center; justify-content: center; }
.quick svg { width: 24px; height: 20px; }
.dots { width: 6px; margin: 9px 4px 5px 0; background: repeating-conic-gradient(#1a3f9a 0 25%, transparent 0 50%) 0 0 / 6px 6px; }
.task { width: 159px; margin: 7px 1px 3px 0; border-radius: 2px; background: linear-gradient(#5b9bf8 0, #3c81f3 20%, #3a7cf0 85%, #2c62d0); box-shadow: inset -1px -1px #2450b8; display: flex; align-items: center; gap: 4px; padding-left: 9px; text-align: left; }
.task.on { background: #1e4fb8; box-shadow: inset 1px 1px 2px #0c2c80; }
.tray { margin-left: auto; width: 113px; margin-top: 4px; background: linear-gradient(#1ab2f4 0, #1290e8 15%, #1290e8 80%, #0e78cc); border-left: 1px solid #0a5cb0; display: flex; align-items: center; }
.less { width: 18px; height: 18px; flex: none; border-radius: 9px; background: radial-gradient(circle at 40% 30%, #6cb8f8, #1468d8 75%); margin-left: -9px; }
.less svg { display: block; width: 16px; height: 16px; margin: 1px; }
.ti { width: 58px; height: 18px; flex: none; }
time { margin-left: 3px; font: 10px/12px "DejaVu Sans Mono", monospace; }
</style>
